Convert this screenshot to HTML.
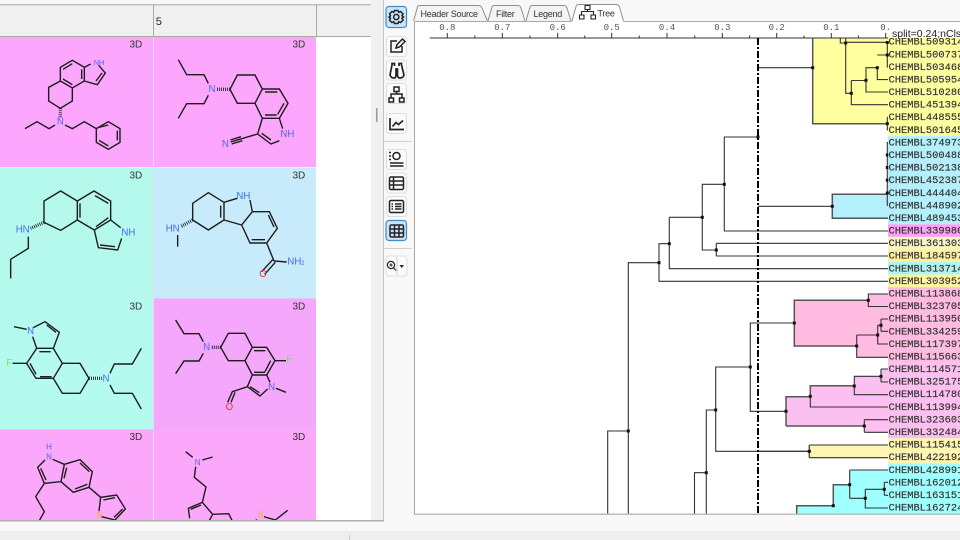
<!DOCTYPE html>
<html><head><meta charset="utf-8"><title>Tree view</title>
<style>
html,body{margin:0;padding:0;background:#fff;width:960px;height:540px;overflow:hidden}
svg{position:absolute;left:0;top:0;display:block}
.m{fill:none;stroke:#1c1c1c;stroke-width:4.2}
.h{fill:none;stroke:#1c1c1c;stroke-width:10;stroke-dasharray:2.5 3.5}
.a{font:29px "Liberation Sans",sans-serif;text-anchor:middle;dominant-baseline:central}
.b{fill:#4a66ff}.r{fill:#f03040}.f{fill:#8cdc5a}.s{fill:#e0b040}
.d{font:10px "Liberation Sans",sans-serif;fill:#333}
.l{font:10.4px "Liberation Mono",monospace;fill:#333;stroke:#333;stroke-width:.15}
.x{font:9px "Liberation Mono",monospace;fill:#555;text-anchor:middle}
.t{font:9px "Liberation Sans",sans-serif;fill:#333;letter-spacing:-.25px}
.tr{fill:none;stroke:#333;stroke-width:1.1}
.th{fill:none;stroke:#555;stroke-width:1.5}
.i{fill:none;stroke:#222;stroke-width:1.5}
</style></head><body>
<svg width="960" height="540" viewBox="0 0 960 540" xmlns="http://www.w3.org/2000/svg">
<!-- backgrounds -->
<rect width="960" height="540" fill="#f8f8f8"/>
<rect x="0" y="5" width="371" height="515" fill="#fff"/>
<rect x="371" y="0" width="13" height="521" fill="#f0f0f0"/>
<rect x="383" y="0" width="1" height="521" fill="#c4c4c4"/>
<!-- grid header -->
<rect x="0" y="5" width="371" height="31" fill="#f0f0f0"/>
<rect x="0" y="4" width="371" height="1.4" fill="#bdbdbd"/>
<rect x="0" y="36" width="371" height="1" fill="#a8a8a8"/>
<rect x="153" y="5" width="1" height="32" fill="#aaa"/>
<rect x="316" y="5" width="1" height="32" fill="#aaa"/>
<text x="155.500" y="25" style="font:11px 'Liberation Mono',monospace;fill:#222">5</text>
<!-- cells -->
<rect x="0" y="37" width="153" height="130" fill="#fda6fd"/>
<rect x="154" y="37" width="162" height="130" fill="#fda6fd"/>
<rect x="0" y="167.500" width="153" height="131" fill="#b4f9ec"/>
<rect x="154" y="167.500" width="162" height="131" fill="#c8ebfb"/>
<rect x="0" y="298.500" width="153" height="131" fill="#b4faef"/>
<rect x="154" y="298.500" width="162" height="131" fill="#f5a7fb"/>
<rect x="0" y="429.500" width="153" height="91" fill="#fba8fb"/>
<rect x="154" y="429.500" width="162" height="91" fill="#fba8fb"/>
<rect x="153" y="37" width="1" height="483" fill="#ecd8f0"/>
<text class="d" x="129.500" y="47.500">3D</text><text class="d" x="292.500" y="47.500">3D</text>
<text class="d" x="129.500" y="178.500">3D</text><text class="d" x="292.500" y="178.500">3D</text>
<text class="d" x="129.500" y="309.500">3D</text><text class="d" x="292.500" y="309.500">3D</text>
<text class="d" x="129.500" y="440">3D</text><text class="d" x="292.500" y="440">3D</text>
<!-- molecule 1 & 2 -->
<g transform="scale(.33333)">
<path class="m" d="M181 202L217 181L253 202V243L217 264L181 243ZM189 208L217 191M245 208V237M189 237L217 254M181 243L146 262V303L181 325L217 303V264M253 202L272 192M296 196L316 219L292 254L253 243M306 219L288 243M165 375L147 386L111 365L75 386M195 375L217 386L253 365L289 386M289 386L325 365L360 386V427L325 448L289 427ZM297 382L325 375M352 392V421M297 421L325 438"/>
<path class="h" d="M181 325V355"/>
<text class="a b" x="181" y="366">N</text><text class="a b" style="font-size:22px" x="297" y="187">NH</text>
<path class="m" d="M712 225H765L787 267L765 310H712L690 268ZM787 267H838L864 310L838 355H787L765 310M795 276H832M852 310L833 343M795 345H830M838 355L848 386M838 422L813 432L773 402L787 355M785 400L813 420M773 402L725 416M725 416L692 426M723 410L691 420M727 422L695 432M625 250L612 224H560L535 179M625 286L612 311H560L535 355"/>
<path class="h" d="M690 268H650"/>
<text class="a b" x="636" y="268">N</text><text class="a b" x="862" y="403">NH</text><text class="a b" x="676" y="434">N</text>
</g>
<!-- molecule 3 & 4 -->
<g transform="translate(0 165) scale(.33333)">
<path class="m" d="M132 172V108L182 78L232 108V165L182 196L132 172M232 108L282 78L332 108V165L283 195L232 165M240 115V158M285 92L325 115M288 185L325 158M332 165L362 188M365 220L353 255L295 248L283 195M300 240L345 245M85 215V250L32 283V340"/>
<path class="h" d="M132 172L92 190"/>
<text class="a b" x="68" y="195">HN</text><text class="a b" x="385" y="204">NH</text>
<path class="m" d="M578 165V115L625 83L672 112V165L625 195L578 165M672 112L712 100M750 105L757 140L725 180L672 165M662 122V158M757 140H808L832 190L800 234H750L725 180M805 150L822 186M755 224H795M800 234L822 288L860 291M818 284L785 320M826 292L794 328M533 210V245"/>
<path class="h" d="M578 165L542 185"/>
<text class="a b" x="518" y="192">HN</text><text class="a b" x="730" y="94">NH</text><text class="a b" x="888" y="291">NH<tspan dy="6" style="font-size:18px">2</tspan></text><text class="a r" x="789" y="328">O</text>
</g>
<!-- molecule 5 & 6 -->
<g transform="translate(0 295) scale(.33333)">
<path class="m" d="M100 98L135 80L178 112L160 160H110L98 125M140 90L168 112M118 170H152M160 160L187 205L160 250H108L80 205L110 160M120 245H155M90 205L108 238M187 205H240L267 250L240 295H187L160 250M80 103L42 95M38 205H80M330 235L343 207H397L424 160M330 270L343 295H397L424 342"/>
<path class="h" d="M267 250H305"/>
<text class="a b" x="92" y="110">N</text><text class="a b" x="318" y="252">N</text><text class="a f" x="28" y="205">F</text>
<path class="m" d="M662 157L685 115H735L757 157L735 197H685L662 157M757 157H800L825 197L800 240H757L735 197M762 167H796M812 197L795 230M762 232H795M800 240L810 262M803 282L780 303L742 275L757 240M750 275L778 293M742 275L697 290L683 322M705 292L693 322M828 280L858 292M825 197H858M610 140L597 116H552L527 75M610 175L597 198H552L527 236"/>
<path class="h" d="M662 157H632"/>
<text class="a b" x="620" y="157">N</text><text class="a b" x="815" y="278">N</text><text class="a f" x="868" y="194">F</text><text class="a r" x="688" y="337">O</text>
</g>
<!-- molecule 7 & 8 -->
<g transform="translate(0 425) scale(.33333)">
<path class="m" d="M135 105L113 127L133 175L183 170L193 118L158 103M122 130L138 165M133 175L107 215L133 260L115 292M193 118L240 104L277 140L267 187L220 202L183 170M200 128L192 160M240 114L268 140M262 178L225 192M267 187L302 217L350 210L376 252L345 285L305 275M302 217L297 258M310 225L345 218M368 252L342 277"/>
<text class="a b" style="font-size:24px" x="147" y="66">H</text><text class="a b" style="font-size:24px" x="147" y="96">N</text><text class="a s" style="font-size:24px" x="297" y="270">S</text>
<path class="m" d="M578 97L557 80M607 105L638 96M587 125L583 157L618 186L607 232L565 250L569 280M603 240L572 253M607 232L638 268L686 266L698 290M638 268L625 292M792 275L826 285L863 256M770 283L762 295"/>
<text class="a b" style="font-size:24px" x="593" y="112">N</text><text class="a s" style="font-size:24px" x="781" y="270">S</text>
</g>
<!-- bottom bars -->
<rect x="0" y="520" width="384" height="1.500" fill="#b0b0b0"/>
<rect x="0" y="521.500" width="960" height="18.500" fill="#f8f8f8"/>
<rect x="0" y="531" width="960" height="9" fill="#eeeeee"/>
<rect x="349" y="535" width="1" height="5" fill="#ccc"/>
<rect x="376" y="108" width="1.500" height="14" fill="#999"/>
<!-- toolbar column -->
<rect x="384" y="0" width="30" height="531" fill="#f8f8f8"/>
<g fill="#fbfbfb" stroke="#dedede">
<rect x="386.500" y="36.500" width="20" height="20" rx="3"/>
<rect x="386.500" y="60" width="20" height="20" rx="3"/>
<rect x="386.500" y="83.500" width="20" height="20" rx="3"/>
<rect x="386.500" y="113.500" width="20" height="20" rx="3"/>
<rect x="386.500" y="149.500" width="20" height="20" rx="3"/>
<rect x="386.500" y="173" width="20" height="20" rx="3"/>
<rect x="386.500" y="196.500" width="20" height="20" rx="3"/>
<rect x="386" y="256" width="21" height="20" rx="3"/>
</g>
<g fill="#cce4f7" stroke="#3f8ccb" stroke-width="1.200">
<rect x="386" y="6.500" width="20.500" height="21" rx="3"/>
<rect x="386" y="220.500" width="20.500" height="20" rx="3"/>
</g>
<rect x="384" y="141" width="28" height="1" fill="#cfcfcf"/>
<rect x="384" y="248" width="28" height="1" fill="#cfcfcf"/>
<!-- toolbar icons -->
<g class="i">
<circle cx="396.300" cy="17" r="2.600"/>
<path d="M394.500 10.500H398L398.700 12.300L400.600 11.500L403 13.900L402 15.700L403.500 17L402 18.300L403 20.100L400.600 22.500L398.700 21.700L398 23.500H394.500L393.800 21.700L391.900 22.500L389.500 20.100L390.500 18.300L389 17L390.500 15.700L389.500 13.900L391.900 11.500L393.800 12.300Z"/>
<path d="M397 41H391V52H402V46M396 48L397 44.500L402.500 39L405 41.500L399.500 47Z"/>
<path d="M392 65L390 75Q391 78 394 78Q396 78 396 75V69H397.500V75Q397.500 78 400 78Q403 78 404 75L401.500 65M392 65V63.500H394.500V66M399 66V63.500H401.500V65" stroke-width="1.700"/>
<path d="M394 87H399V91.500H394ZM396.500 91.500V94M391 98V94H402V98M389 98H393.500V102H389ZM399.500 98H404V102H399.500Z"/>
<path d="M390 118V129.500H404M392.500 126.500L396 122.500L398.500 124.500L403 120.500" stroke-width="1.700"/>
<circle cx="396.500" cy="156" r="3.500"/>
<path d="M389 152.500H391M389 156H391M389 159.500H391M390 163H403.500M390 166H403.500" stroke-width="1.400"/>
<rect x="389.500" y="177" width="14" height="12.500" rx="1.500"/>
<path d="M389.500 181H403.500M389.500 185H403.500M393.500 177V189.500" />
<rect x="389.500" y="200.500" width="14" height="12" rx="1.500"/>
<path d="M391.500 204H393M395 204H401.500M391.500 206.500H393M395 206.500H401.500M391.500 209H393M395 209H401.500"/>
<rect x="390" y="225" width="13.500" height="12" rx="1.500"/>
<path d="M390 229H403.500M390 233H403.500M394.500 225V237M399 225V237"/>
<circle cx="391" cy="265" r="3.600" stroke-width="1.200"/>
<path d="M393.600 267.700L396 270.500M389.400 265H392.600M391 263.400V266.600" stroke-width="1.100"/>
</g>
<rect x="396.500" y="257" width="1" height="18" fill="#ccc"/>
<path d="M399.500 265H404L401.700 268Z" fill="#222"/>
<!-- tabs -->
<g stroke="#8f8f8f" stroke-width="1">
<path d="M413.500 21L417.500 7Q418 5.500 420 5.500H478Q481 5.500 482 8L487.500 21" fill="#f4f4f4"/>
<path d="M488 21L492 7Q492.500 5.500 494.500 5.500H518Q520 5.500 521 8L525 21" fill="#f4f4f4"/>
<path d="M526 21L530 7Q530.500 5.500 532.500 5.500H564Q566 5.500 567 8L571 21" fill="#f4f4f4"/>
<path d="M572 21L576 6.500Q576.500 4.500 579 4.500H616Q618.500 4.500 619.500 7L623.500 21" fill="#fff"/>
</g>
<text class="t" x="420.500" y="17">Header Source</text>
<text class="t" x="496" y="17">Filter</text>
<text class="t" x="533.500" y="17">Legend</text>
<text class="t" x="597.500" y="16.500">Tree</text>
<path d="M585 5.500H590V9.500H585ZM587.500 9.500V11.500M581.500 15V11.500H593.500V15M579.500 15H584V19H579.500ZM591 15H595.500V19H591Z" fill="none" stroke="#222" stroke-width="1.100"/>
<!-- tree panel -->
<rect x="414" y="21.500" width="546" height="493" fill="#fff"/>
<path d="M414.500 514V21.500H572M623.500 21.500H960" fill="none" stroke="#a8a8a8"/>
<!-- cluster fills -->
<rect x="812.700" y="38" width="75.300" height="85.700" fill="#ffff9f"/>
<rect x="832.300" y="194.300" width="55.700" height="24" fill="#b3f0fb"/>
<polygon points="794.300,300.300 868.300,300.300 868.300,294 888,294 888,357.300 856.700,357.300 856.700,346 794.300,346" fill="#ffbbe0"/>
<polygon points="786,396.700 810.300,396.700 810.300,385.700 854.300,385.700 854.300,376.300 881,376.300 881,369 888,369 888,432.300 864.300,432.300 864.300,426 786,426" fill="#fcc0f0"/>
<rect x="809.300" y="445" width="78.700" height="12.700" fill="#fdf5b0"/>
<polygon points="796.700,505.700 833.300,505.700 833.300,484.700 849.700,484.700 849.700,470 888,470 888,514 796.700,514" fill="#a0ffff"/>
<!-- label highlight -->
<rect x="888" y="35.400" width="72" height="100.700" fill="#ffff9f"/>
<rect x="888" y="136.100" width="72" height="88.200" fill="#b3f0fb"/>
<rect x="888" y="224.300" width="72" height="12.600" fill="#ffa0f8"/>
<rect x="888" y="236.900" width="72" height="12.600" fill="#f8f5c0"/>
<rect x="888" y="249.500" width="72" height="12.500" fill="#fff0a0"/>
<rect x="888" y="262" width="72" height="12.600" fill="#b0f5f0"/>
<rect x="888" y="274.600" width="72" height="12.600" fill="#fff59f"/>
<rect x="888" y="287.200" width="72" height="75.600" fill="#ffbbe0"/>
<rect x="888" y="362.800" width="72" height="75.500" fill="#fcc0f0"/>
<rect x="888" y="438.300" width="72" height="25.200" fill="#fdf5b0"/>
<rect x="888" y="463.500" width="72" height="50.500" fill="#a0ffff"/>
<!-- axis -->
<path d="M429.700 38H888M447.300 33V38M502.300 33V38M557.700 33V38M611.700 33V38M667 33V38M722.300 33V38M776.700 33V38M831.300 33V38M885.700 33V38M474.800 35.500V38M530 35.500V38M584.700 35.500V38M639.300 35.500V38M694.700 35.500V38M749.500 35.500V38M804 35.500V38M858.500 35.500V38" fill="none" stroke="#333" stroke-width="1"/>
<g class="x"><text x="447.300" y="30">0.8</text><text x="502.300" y="30">0.7</text><text x="557.700" y="30">0.6</text><text x="611.700" y="30">0.5</text><text x="667" y="30">0.4</text><text x="722.300" y="30">0.3</text><text x="776.700" y="30">0.2</text><text x="831.300" y="30">0.1</text><text x="885.700" y="30">0.</text></g>
<!-- tree lines -->
<path class="tr" d="M758 67.700H812.700M840.300 38V43H845.700V38M845.700 43V93.300H851.300M845.700 42.300H888M851.300 80.500V104.700H888M851.300 80.500H866V92H888M866 80.300V67.700H877.300V79.600H888M877.300 55H887.300V42M887.300 55V67H888M887.300 55H888M887.300 117.200V129.800H888M887.300 117.200H888"/>
<path class="th" d="M812.700 38V123.700H887.500"/>
<path class="tr" d="M887.300 142V205.500M887.300 142.400H888M887.300 155H888M887.300 167.600H888M887.300 180.200H888M887.300 192.800H888M887.300 205.400H888"/>
<path class="th" d="M888 194.300H832.300V218.300H888"/>
<path class="tr" d="M758 206.300H832.300M758 137H724.300V231H888M724.300 184.300H702.300V250H716.300M716.300 243.300V256M716.300 243.300H888M716.300 256H888M702.300 217.300H669.300M669.300 217.300V268.700H888M669.300 243.700H659V281.300H888M659 262.700H628.300V514M628.300 431H607.700V514"/>
<path class="tr" d="M794.300 323H750.300V411.300H786M750.300 367H715.700V451.300H809.300M715.700 410H706.300V514M706.300 472.700H694.500V514M868.300 300.300V294H888M868.300 300.300V306.500H888"/>
<path class="th" d="M868.300 300.300H794.300V346H856.700M786 426H864.300M786 426V396.700H810.300M810.300 396.700V385.700H854.300"/>
<path class="tr" d="M856.700 335V357.300H888M856.700 335H877.700M877.700 325.300V344H888M877.700 325.300H881M881 319V331.300M881 319H888M881 331.300H888M881 369V382M881 369H888M881 382H888M881 376.300H854.300V394.700H888M810.300 396.700V407H888M864.300 419.700V432.300M864.300 419.700H888M864.300 432.300H888"/>
<path class="th" d="M809.300 445V457.700"/>
<path class="tr" d="M809.300 445H888M809.300 457.700H888"/>
<path class="tr" d="M758 451.300H809.300M849.700 470V498.300M849.700 470H888M849.700 498.300H865.300M865.300 489.300V508H888M865.300 489.300H884.300M884.300 482.300V495.300M884.300 482.300H888M884.300 495.300H888"/>
<path class="th" d="M849.700 484.700H833.300V505.700H796.700V514"/>
<!-- nodes -->
<g fill="#111">
<rect x="811.200" y="66.200" width="3" height="3"/><rect x="844.200" y="41.500" width="3" height="3"/><rect x="849.800" y="91.800" width="3" height="3"/><rect x="864.500" y="78.800" width="3" height="3"/><rect x="875.800" y="66.200" width="3" height="3"/><rect x="885.800" y="53.500" width="3" height="3"/><rect x="885.800" y="41" width="3" height="3"/><rect x="885.800" y="122.200" width="3" height="3"/>
<rect x="885.800" y="153.500" width="2.500" height="3"/><rect x="885.800" y="166" width="2.500" height="3"/><rect x="885.800" y="178.700" width="2.500" height="3"/><rect x="885.800" y="191.500" width="3" height="3"/>
<rect x="830.800" y="204.800" width="3" height="3"/><rect x="722.800" y="182.800" width="3" height="3"/><rect x="700.800" y="215.800" width="3" height="3"/><rect x="714.800" y="248.500" width="3" height="3"/><rect x="667.800" y="242.200" width="3" height="3"/><rect x="657.500" y="261.200" width="3" height="3"/><rect x="626.800" y="429.500" width="3" height="3"/>
<rect x="756.500" y="135.500" width="3" height="3"/><rect x="748.800" y="365.500" width="3" height="3"/><rect x="714.200" y="408.500" width="3" height="3"/><rect x="704.800" y="471.200" width="3" height="3"/>
<rect x="792.800" y="321.500" width="3" height="3"/><rect x="866.800" y="298.800" width="3" height="3"/><rect x="855.200" y="344.500" width="3" height="3"/><rect x="876.200" y="333.500" width="3" height="3"/><rect x="879.500" y="323.800" width="3" height="3"/>
<rect x="879.500" y="374.800" width="3" height="3"/><rect x="852.800" y="384.500" width="3" height="3"/><rect x="808.800" y="394.800" width="3" height="3"/><rect x="784.500" y="409.800" width="3" height="3"/><rect x="862.800" y="424.500" width="3" height="3"/>
<rect x="807.800" y="449.800" width="3" height="3"/><rect x="848.200" y="483.200" width="3" height="3"/><rect x="831.800" y="504.200" width="3" height="3"/><rect x="863.800" y="496.800" width="3" height="3"/><rect x="882.800" y="487.800" width="3" height="3"/>
</g>
<!-- cut line -->
<path d="M758 38V514" fill="none" stroke="#000" stroke-width="2" stroke-dasharray="7 2 2 2"/>
<!-- labels -->
<g class="l">
<text x="888.500" y="44.700">CHEMBL509314</text>
<text x="888.500" y="57.300">CHEMBL500737</text>
<text x="888.500" y="69.900">CHEMBL503468</text>
<text x="888.500" y="82.500">CHEMBL505954</text>
<text x="888.500" y="95.100">CHEMBL510280</text>
<text x="888.500" y="107.700">CHEMBL451394</text>
<text x="888.500" y="120.200">CHEMBL448555</text>
<text x="888.500" y="132.800">CHEMBL501645</text>
<text x="888.500" y="145.400">CHEMBL374973</text>
<text x="888.500" y="158">CHEMBL500488</text>
<text x="888.500" y="170.600">CHEMBL502138</text>
<text x="888.500" y="183.200">CHEMBL452387</text>
<text x="888.500" y="195.800">CHEMBL444404</text>
<text x="888.500" y="208.400">CHEMBL448902</text>
<text x="888.500" y="221">CHEMBL489453</text>
<text x="888.500" y="233.600">CHEMBL339980</text>
<text x="888.500" y="246.100">CHEMBL361303</text>
<text x="888.500" y="258.700">CHEMBL184597</text>
<text x="888.500" y="271.300">CHEMBL313714</text>
<text x="888.500" y="283.900">CHEMBL303952</text>
<text x="888.500" y="296.500">CHEMBL113868</text>
<text x="888.500" y="309.100">CHEMBL323705</text>
<text x="888.500" y="321.700">CHEMBL113950</text>
<text x="888.500" y="334.300">CHEMBL334259</text>
<text x="888.500" y="346.900">CHEMBL117397</text>
<text x="888.500" y="359.500">CHEMBL115663</text>
<text x="888.500" y="372">CHEMBL114571</text>
<text x="888.500" y="384.600">CHEMBL325175</text>
<text x="888.500" y="397.200">CHEMBL114780</text>
<text x="888.500" y="409.800">CHEMBL113994</text>
<text x="888.500" y="422.400">CHEMBL323603</text>
<text x="888.500" y="435">CHEMBL332484</text>
<text x="888.500" y="447.600">CHEMBL115415</text>
<text x="888.500" y="460.200">CHEMBL422192</text>
<text x="888.500" y="472.800">CHEMBL428991</text>
<text x="888.500" y="485.400">CHEMBL162012</text>
<text x="888.500" y="498">CHEMBL163151</text>
<text x="888.500" y="510.600">CHEMBL162724</text>
</g>
<rect x="890" y="27" width="70" height="11" fill="#fff"/>
<text x="892" y="37" style="font:10.5px 'Liberation Sans',sans-serif;fill:#222">split=0.24;nCls</text>
<rect x="414" y="513.500" width="546" height="1.400" fill="#b8b8b8"/>
</svg>
</body></html>
